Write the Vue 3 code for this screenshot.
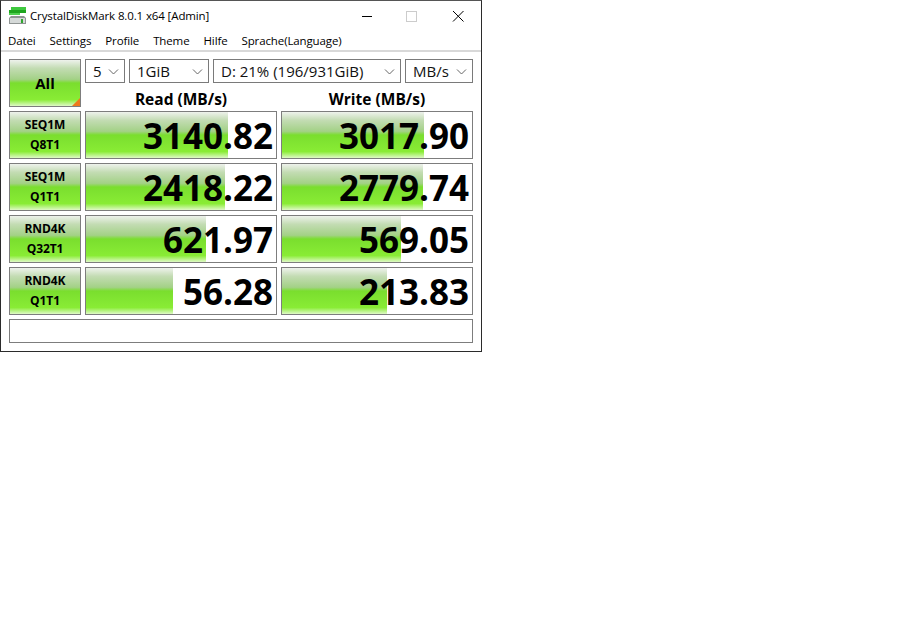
<script setup>
const menus = ['Datei', 'Settings', 'Profile', 'Theme', 'Hilfe', 'Sprache(Language)']
const combos = [
  { text: '5', cls: 'c5' },
  { text: '1GiB', cls: 'c1' },
  { text: 'D: 21% (196/931GiB)', cls: 'c2' },
  { text: 'MB/s', cls: 'c3' },
]
const rows = [
  { a: 'SEQ1M', b: 'Q8T1', read: '3140.82', rw: 142, write: '3017.90', ww: 142 },
  { a: 'SEQ1M', b: 'Q1T1', read: '2418.22', rw: 139, write: '2779.74', ww: 141 },
  { a: 'RND4K', b: 'Q32T1', read: '621.97', rw: 120, write: '569.05', ww: 119 },
  { a: 'RND4K', b: 'Q1T1', read: '56.28', rw: 87, write: '213.83', ww: 105 },
]
</script>

<template>
  <div class="window">
    <header class="titlebar">
      <svg class="appicon" width="18" height="18" viewBox="0 0 18 18">
        <rect x="2" y="0" width="15" height="3" fill="#3ec83e" />
        <rect x="0" y="3" width="17" height="3" fill="#1fa51f" />
        <rect x="0" y="6" width="11" height="2" fill="#4fd04f" />
        <path d="M2 9h13l2 2v6H0v-6z" fill="#8f9493" />
        <rect x="1" y="11" width="15" height="5" fill="#d5d9d8" />
        <rect x="12" y="12" width="2" height="4" fill="#2ea52e" />
      </svg>
      <span class="title">CrystalDiskMark 8.0.1 x64 [Admin]</span>
      <div class="winbtns">
        <svg width="46" height="30" viewBox="0 0 46 30"><path d="M19 15.5h10" stroke="#000" /></svg>
        <svg width="46" height="30" viewBox="0 0 46 30"><rect x="17.500" y="10.500" width="10" height="10" fill="none" stroke="#ccc" /></svg>
        <svg width="46" height="30" viewBox="0 0 46 30"><path d="M18 10l10.500 10.500M28.500 10L18 20.500" stroke="#000" fill="none" /></svg>
      </div>
    </header>
    <nav class="menubar">
      <span v-for="m in menus" :key="m">{{ m }}</span>
    </nav>
    <main class="board">
      <button class="gloss all">All<i class="corner"></i></button>
      <div class="controls">
        <div v-for="c in combos" :key="c.text" class="combo">
          {{ c.text }}
          <svg class="chev" width="11" height="6" viewBox="0 0 11 6"><path d="M1 .5l4.500 4.500L10 .5" fill="none" stroke="#666" /></svg>
        </div>
      </div>
      <div class="head">Read (MB/s)</div>
      <div class="head">Write (MB/s)</div>
      <template v-for="r in rows" :key="r.read">
        <button class="gloss label"><span>{{ r.a }}</span><span>{{ r.b }}</span></button>
        <div class="meter">
          <div class="fill gloss-bg" :style="{ width: r.rw + 'px' }"></div>
          <span class="value">{{ r.read }}</span>
        </div>
        <div class="meter">
          <div class="fill gloss-bg" :style="{ width: r.ww + 'px' }"></div>
          <span class="value">{{ r.write }}</span>
        </div>
      </template>
      <div class="status"></div>
    </main>
  </div>
</template>

<style>
html, body { background: #fff; }
</style>

<style scoped>
.window {
  width: 482px;
  height: 352px;
  box-sizing: border-box;
  border: 1px solid #2b2b2b;
  border-top-color: #555;
  background: #fff;
  font-family: "Open Sans", "Noto Sans", sans-serif;
  color: #000;
}
.titlebar {
  height: 29px;
  display: flex;
  align-items: center;
  padding-left: 8px;
}
.appicon { margin-right: 3px; margin-top: 1px; }
.title { font-size: 11.5px; letter-spacing: -0.12px; }
.winbtns { margin-left: auto; display: flex; }
.winbtns svg { display: block; }
.menubar {
  height: 20px;
  display: flex;
  align-items: center;
  gap: 14px;
  padding-left: 7px;
  font-size: 11.5px;
  letter-spacing: -0.12px;
  border-bottom: 2px solid #d8d8d8;
}
.board {
  display: grid;
  grid-template-columns: 72px 192px 192px;
  grid-template-rows: 24px 20px;
  grid-auto-rows: 48px;
  gap: 4px;
  padding: 7px 0 0 8px;
}
.gloss, .gloss-bg {
  background: linear-gradient(#eef2ec 0%, #c3dcb3 18%, #a3d186 42%, #7ade2e 50%, #89ec35 86%, #dff9c6 100%);
}
.gloss {
  box-sizing: border-box;
  border: 1px solid #7d7d7d;
  margin: 0;
  padding: 0;
  font-family: inherit;
  color: #000;
  position: relative;
}
.all {
  grid-row: 1 / 3;
  font-size: 15px;
  font-weight: 700;
  overflow: hidden;
}
.corner {
  position: absolute;
  right: 0;
  bottom: 0;
  width: 0;
  height: 0;
  border-left: 8px solid transparent;
  border-bottom: 8px solid #ee7a1c;
}
.controls {
  grid-column: 2 / 4;
  display: grid;
  grid-template-columns: 40px 80px 188px 68px;
  column-gap: 4px;
}
.combo {
  box-sizing: border-box;
  height: 24px;
  border: 1px solid #7a7a7a;
  font-size: 15px;
  line-height: 22px;
  padding-left: 7px;
  position: relative;
  color: #111;
}
.chev { position: absolute; right: 5px; top: 9px; }
.head {
  font-size: 15.5px;
  font-weight: 700;
  text-align: center;
  line-height: 24px;
  height: 20px;
}
.label {
  display: flex;
  flex-direction: column;
  align-items: center;
  justify-content: center;
  gap: 2px;
  font-size: 12px;
  font-weight: 700;
  letter-spacing: -0.1px;
  line-height: 18px;
}
.meter {
  box-sizing: border-box;
  border: 1px solid #7d7d7d;
  background: #fff;
  position: relative;
  overflow: hidden;
}
.fill { height: 100%; }
.value {
  position: absolute;
  right: 3px;
  top: 0;
  font-size: 35px;
  font-weight: 700;
  line-height: 48px;
}
.status {
  grid-column: 1 / 4;
  height: 24px;
  box-sizing: border-box;
  border: 1px solid #7d7d7d;
}
</style>
